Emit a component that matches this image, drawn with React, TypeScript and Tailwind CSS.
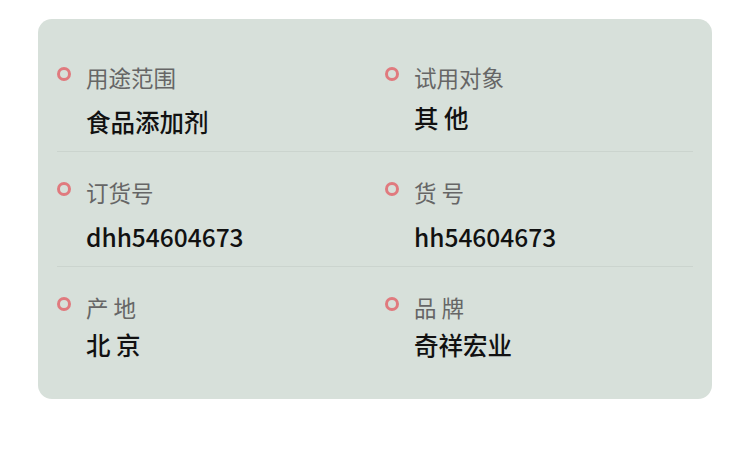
import React from "react";

type Item = { label: string; value: string; vmt: string };

const rows: Item[][] = [
  [
    { label: "用途范围", value: "食品添加剂", vmt: "mt-[15px]" },
    { label: "试用对象", value: "其 他", vmt: "mt-[11px]" },
  ],
  [
    { label: "订货号", value: "dhh54604673", vmt: "mt-[15px]" },
    { label: "货 号", value: "hh54604673", vmt: "mt-[15px]" },
  ],
  [
    { label: "产 地", value: "北 京", vmt: "mt-[8px]" },
    { label: "品 牌", value: "奇祥宏业", vmt: "mt-[8px]" },
  ],
];

function Cell({ item }: { item: Item }) {
  return (
    <div className="flex items-start">
      <div className="mt-[5px] h-[14px] w-[14px] shrink-0 rounded-full border-[3px] border-[#e07a7e]" />
      <div className="ml-[15px] flex flex-col">
        <div className="text-[22.5px] leading-[30px] text-[#666666]">{item.label}</div>
        <div className={`${item.vmt} text-[24.5px] leading-[30px] font-medium text-[#111111]`}>{item.value}</div>
      </div>
    </div>
  );
}

export default function App() {
  return (
    <div
      className="h-[456px] w-[750px] bg-white pt-[19px] pl-[38px]"
      style={{ fontFamily: '"Noto Sans CJK SC", "Noto Sans", sans-serif' }}
    >
      <div className="w-[674px] rounded-[14px] bg-[#d7e0da] px-[19px] pt-[18px] pb-[39px]">
        {rows.map((row, i) => (
          <div
            key={i}
            className={`grid grid-cols-[328px_1fr] pt-[25px] ${
              i < rows.length - 1 ? "h-[115px] border-b border-[#cbd4ce]" : ""
            }`}
          >
            <Cell item={row[0]} />
            <Cell item={row[1]} />
          </div>
        ))}
      </div>
    </div>
  );
}
